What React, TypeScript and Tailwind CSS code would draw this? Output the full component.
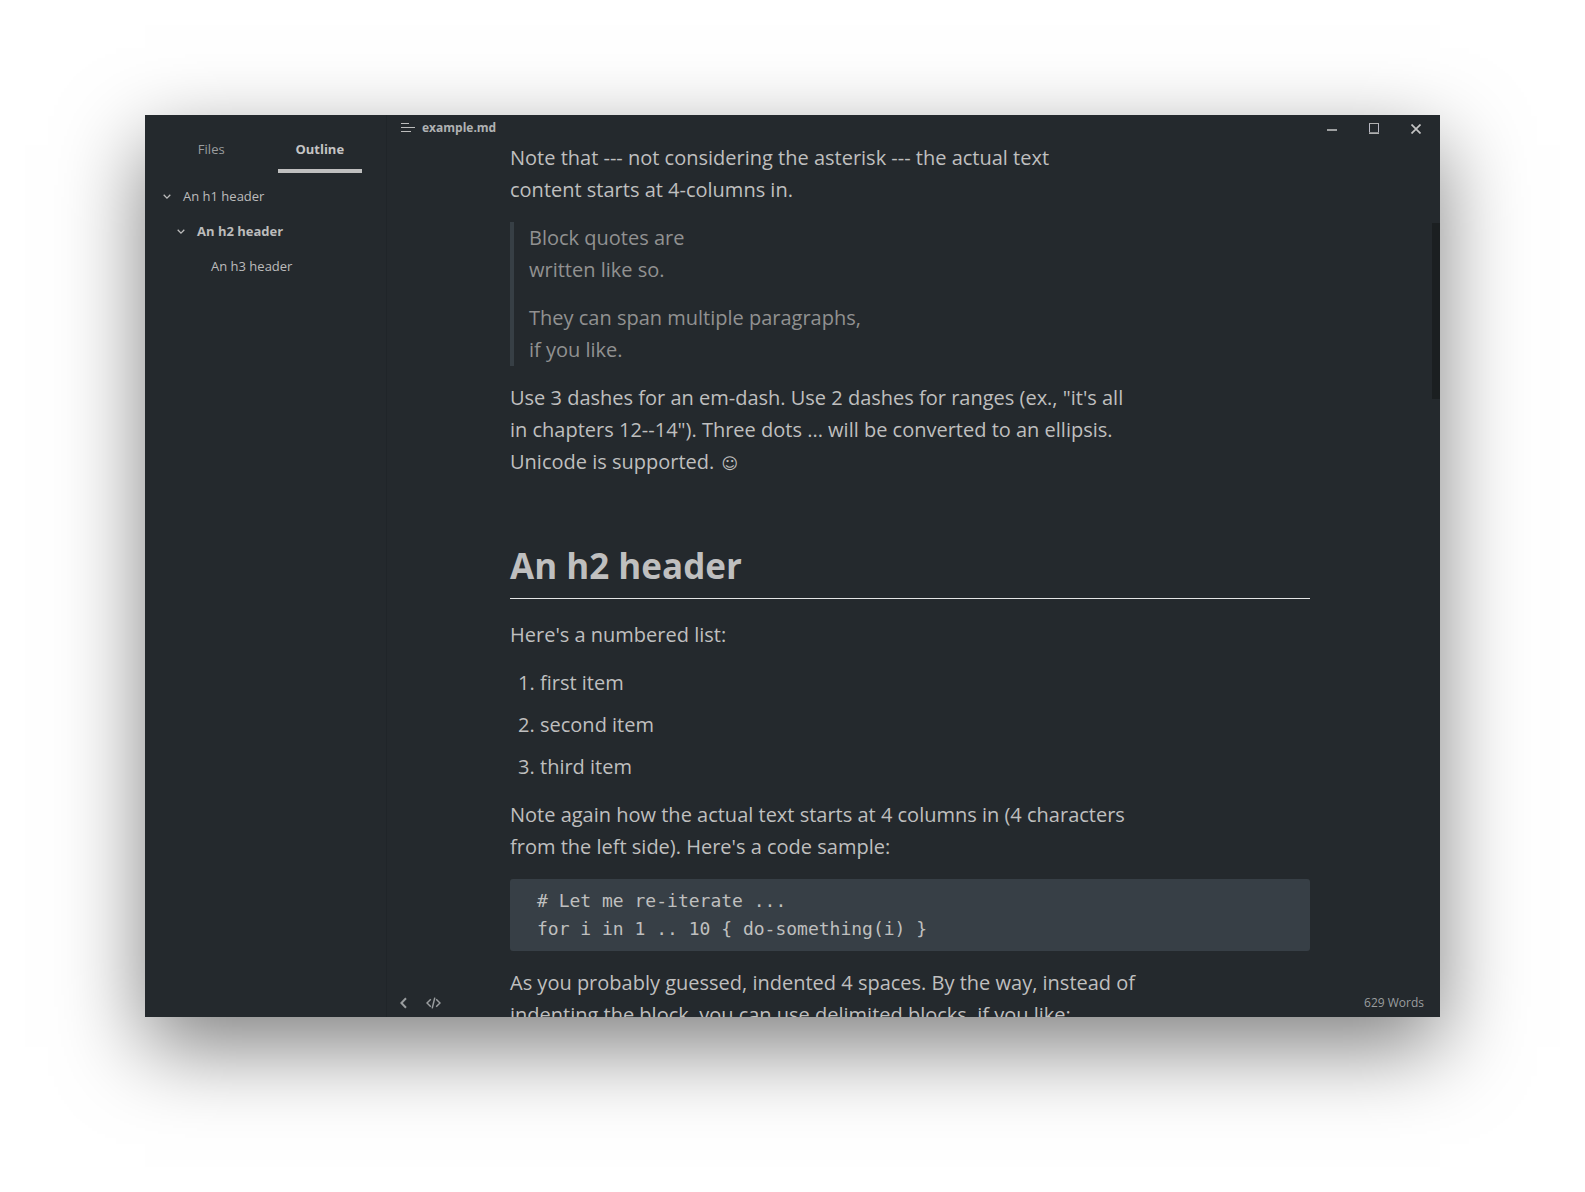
import type { ReactNode } from "react";

type OutlineEntry = { label: string; indent: string; open?: boolean; active?: boolean };

const outline: OutlineEntry[] = [
  { label: "An h1 header", indent: "pl-4", open: true },
  { label: "An h2 header", indent: "pl-[30px]", open: true, active: true },
  { label: "An h3 header", indent: "pl-11" },
];

function Chevron() {
  return (
    <svg width="8" height="6" viewBox="0 0 8 6" fill="none" stroke="currentColor" strokeWidth="1.3" aria-hidden="true">
      <path d="M0.7 0.8 4 4.1 7.3 0.8" />
    </svg>
  );
}

function Sidebar() {
  return (
    <aside className="flex w-[242px] shrink-0 flex-col border-r border-[#202529]">
      <div role="tablist" className="grid grid-cols-2 px-3 pt-3 text-[13px] leading-5">
        <button role="tab" aria-selected="false" className="mx-3 h-[46px] border-b-4 border-transparent pt-0.5 text-[#9a9d9f]">
          Files
        </button>
        <button role="tab" aria-selected="true" className="mx-3 h-[46px] border-b-4 border-[#bfbfbf] pt-0.5 font-bold text-[#c4c4c4]">
          Outline
        </button>
      </div>
      <nav className="mt-1.5 text-[13px] text-[#bcbcbc]" aria-label="Outline">
        {outline.map((e) => (
          <a key={e.label} href="#outline" className={`flex h-[35px] items-center ${e.indent} ${e.active ? "font-bold" : ""}`}>
            <span className="flex w-[22px] pl-0.5">{e.open && <Chevron />}</span>
            {e.label}
          </a>
        ))}
      </nav>
    </aside>
  );
}

function TitleBar() {
  return (
    <header className="flex h-[27px] shrink-0 items-start justify-between pl-3.5 text-[#b0b2b3]">
      <div className="flex h-[25px] items-center gap-[7px]">
        <svg width="14" height="9" viewBox="0 0 14 9" stroke="#bcbcbc" shapeRendering="crispEdges" aria-hidden="true">
          <path d="M0 .5h8M0 4.5h14M0 8.5h10" />
        </svg>
        <span className="text-xs font-bold">example.md</span>
      </div>
      <div className="flex h-[27px] pr-[3px]">
        <button aria-label="Minimize" className="flex w-[42px] items-center justify-center">
          <svg width="10" height="10" viewBox="0 0 10 10" shapeRendering="crispEdges">
            <path d="M0 5h10v2H0z" fill="#9d9fa0" />
          </svg>
        </button>
        <button aria-label="Maximize" className="flex w-[42px] items-center justify-center">
          <svg width="10" height="11" viewBox="0 0 10 11" fill="none" shapeRendering="crispEdges">
            <path d="M.5 0v11M9.5 0v11" stroke="#b8b8c4" />
            <path d="M0 .5h10M0 10h10" stroke="#b0b0b0" />
            <path d="M0 9.5h10" stroke="#8d8f91" />
          </svg>
        </button>
        <button aria-label="Close" className="flex w-[42px] items-center justify-center">
          <svg width="10" height="10" viewBox="0 0 10 10" stroke="#c4c4c4" strokeWidth="1.7">
            <path d="M.5.5l9 9M9.5.5l-9 9" />
          </svg>
        </button>
      </div>
    </header>
  );
}

function P({ children }: { children: ReactNode }) {
  return <p className="whitespace-pre-line">{children}</p>;
}

function Document() {
  return (
    <article className="mx-auto flex w-full max-w-[800px] flex-col gap-4 text-xl leading-8 text-[#bfbfbf]">
      <P>{"Note that --- not considering the asterisk --- the actual text\ncontent starts at 4-columns in."}</P>
      <blockquote className="flex flex-col gap-4 border-l-4 border-[#373f45] pl-[15px] text-[#919191]">
        <P>{"Block quotes are\nwritten like so."}</P>
        <P>{"They can span multiple paragraphs,\nif you like."}</P>
      </blockquote>
      <P>
        {"Use 3 dashes for an em-dash. Use 2 dashes for ranges (ex., \"it's all\nin chapters 12--14\"). Three dots ... will be converted to an ellipsis.\nUnicode is supported. "}
        <span className="ml-0.5 text-base leading-none">☺</span>
      </P>
      <h2 className="mt-12 mb-1 border-b border-[#e4e5e5] pb-2 text-[35px] leading-[48px] font-bold">An h2 header</h2>
      <P>Here's a numbered list:</P>
      <ol className="flex list-decimal flex-col gap-2.5 pl-[30px]">
        <li>first item</li>
        <li>second item</li>
        <li>third item</li>
      </ol>
      <P>{"Note again how the actual text starts at 4 columns in (4 characters\nfrom the left side). Here's a code sample:"}</P>
      <pre className="rounded-[3px] bg-[#373f46] py-2 pl-[27px] font-['DejaVu_Sans_Mono',monospace] text-lg leading-7">
        {"# Let me re-iterate ...\nfor i in 1 .. 10 { do-something(i) }"}
      </pre>
      <P>{"As you probably guessed, indented 4 spaces. By the way, instead of\nindenting the block, you can use delimited blocks, if you like:"}</P>
    </article>
  );
}

function StatusBar() {
  return (
    <footer className="absolute inset-x-0 bottom-0 flex h-[29px] items-center justify-between pr-4 pl-[13px] text-xs text-[#9a9d9f]">
      <div className="flex items-center gap-[19px]">
        <button aria-label="Toggle sidebar">
          <svg width="7" height="12" viewBox="0 0 7 12" fill="none" stroke="currentColor" strokeWidth="2">
            <path d="M6 1.2 1.4 6 6 10.8" />
          </svg>
        </button>
        <button aria-label="Toggle source code mode">
          <svg width="15" height="12" viewBox="0 0 15 12" fill="none" stroke="currentColor" strokeWidth="1.5">
            <path d="M4.8 2.2 1 6l3.8 3.8M10.2 2.2 14 6l-3.8 3.8M8.8.6 6.2 11.4" />
          </svg>
        </button>
      </div>
      <span>629 Words</span>
    </footer>
  );
}

export default function App() {
  return (
    <div className="h-screen bg-white px-[145px] pt-[115px] pb-[175px] font-['Open_Sans','DejaVu_Sans',sans-serif]">
      <div className="flex h-full bg-[#24292d] shadow-[0_30px_80px_rgba(0,0,0,0.5)]">
        <Sidebar />
        <main className="relative flex min-w-0 flex-1 flex-col">
          <TitleBar />
          <div className="min-h-0 flex-1 overflow-hidden pr-[7px]">
            <Document />
          </div>
          <div className="absolute top-[108px] right-0 h-44 w-2 bg-[#1b1f21]" />
          <StatusBar />
        </main>
      </div>
    </div>
  );
}
